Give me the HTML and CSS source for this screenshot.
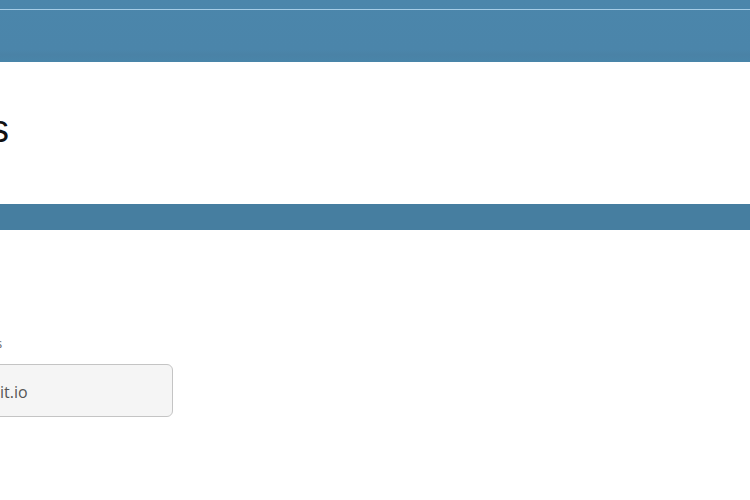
FILE: index.html
```html
<!DOCTYPE html>
<html lang="en">
<head>
<meta charset="utf-8">
<title>Settings</title>
<link rel="stylesheet" href="styles.css">
</head>
<body>
<header class="topbar">
  <div class="topbar-line"></div>
</header>
<section class="hero">
  <h1 class="hero-title">s</h1>
</section>
<div class="band"></div>
<main class="content">
  <label class="field-label" for="domain">s</label>
  <div class="field-input" id="domain"><span class="field-value">it.io</span></div>
</main>
</body>
</html>
```

FILE: styles.css
```css
html, body {
  margin: 0;
  padding: 0;
  background: #ffffff;
}
body {
  font-family: "Liberation Sans", Arial, sans-serif;
  overflow: hidden;
}
.topbar {
  height: 62px;
  padding-top: 9px;
  box-sizing: border-box;
  background: linear-gradient(to bottom, #4b86ab 0%, #4b85aa 80%, #4a82a6 88%, #4985a9 100%);
}
.topbar-line {
  height: 1px;
  background: #a6cde6;
}
.hero {
  height: 142px;
  display: flex;
  align-items: center;
  overflow: hidden;
}
.hero-title {
  margin: 0 0 0 -10px;
  font-size: 38px;
  font-weight: normal;
  color: #111111;
  line-height: 1;
  padding-bottom: 8px;
}
.band {
  height: 26px;
  background: #467ea0;
}
.content {
  padding-top: 104px;
  overflow: hidden;
}
.field-label {
  display: block;
  margin-left: -4px;
  font-family: "Open Sans", sans-serif;
  font-size: 13px;
  line-height: 18px;
  color: #666666;
  height: 30px;
}
.field-input {
  margin-left: -20px;
  width: 193px;
  height: 53px;
  box-sizing: border-box;
  border: 1px solid #c4c4c4;
  border-radius: 6px;
  background: #f5f5f5;
  font-family: "Open Sans", sans-serif;
  font-size: 16px;
  color: #555555;
  display: flex;
  align-items: center;
  padding-left: 19px;
}
.field-value {
  padding-top: 2px;
}
```
